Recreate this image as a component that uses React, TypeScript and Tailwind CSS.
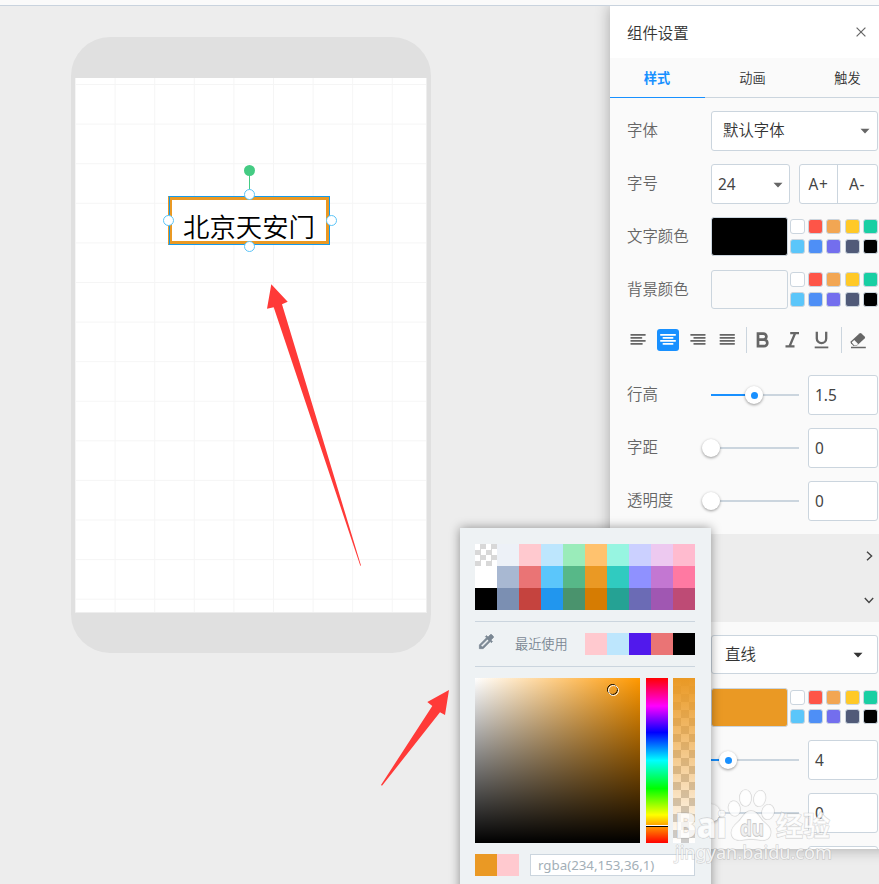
import React from "react";

const PRESETS = [
  "bg-white", "bg-[#fe5548]", "bg-[#f2a653]", "bg-[#ffc927]", "bg-[#18cfa3]",
  "bg-[#5bc6fa]", "bg-[#4e8ff6]", "bg-[#736eee]", "bg-[#505a78]", "bg-black",
];

const PALETTE = [
  "checker", "bg-[#edf1f7]", "bg-[#ffc9cf]", "bg-[#bde6fd]", "bg-[#9aecba]", "bg-[#ffc26e]", "bg-[#97f5e1]", "bg-[#cbd0ff]", "bg-[#edc9f0]", "bg-[#ffbbcf]",
  "bg-white", "bg-[#a8b8d2]", "bg-[#ea7475]", "bg-[#5bc6fb]", "bg-[#57b888]", "bg-[#ea9924]", "bg-[#30cbc0]", "bg-[#8f91ff]", "bg-[#c377d2]", "bg-[#ff79a2]",
  "bg-black", "bg-[#7b8fb2]", "bg-[#c5433e]", "bg-[#2196ee]", "bg-[#4a936d]", "bg-[#d67c02]", "bg-[#25a294]", "bg-[#6b6bb5]", "bg-[#a057b2]", "bg-[#be4b75]",
];

const RECENT = ["bg-[#ffc9cf]", "bg-[#bde6fd]", "bg-[#5119ec]", "bg-[#ea7475]", "bg-black"];

function Label({ children }: { children?: React.ReactNode }) {
  return <div className="w-[84px] shrink-0 text-[15.4px] leading-none text-[#666]">{children}</div>;
}

function Caret({ className = "" }: { className?: string }) {
  return (
    <svg className={className} width="10" height="6" viewBox="0 0 10 6">
      <path d="M0.5 0.8H9.5L5 5.5Z" fill="currentColor" />
    </svg>
  );
}

function Swatches({ tight = false }: { tight?: boolean }) {
  return (
    <div className={`ml-[2px] grid grid-cols-[repeat(5,15px)] gap-x-[3.2px] ${tight ? "gap-y-[4px]" : "gap-y-[5px]"}`}>
      {PRESETS.map((c) => (
        <div key={c} className={`h-[15px] w-[15px] rounded-[3px] border border-[#cbd5de] ${c}`} />
      ))}
    </div>
  );
}

function ColorRow({ label, color, tight }: { label: string; color: string; tight?: boolean }) {
  return (
    <div className={tight ? "flex h-10 items-center" : "flex h-10 items-center pb-[2px]"}>
      <div className="pt-[2px]"><Label>{label}</Label></div>
      <div className={`h-[39px] w-[77px] rounded-[3px] border border-[#cbd5de] ${color}`} />
      <Swatches tight={tight} />
    </div>
  );
}

function SliderRow({ label, at, value, active }: { label: string; at: string; value: string; active?: boolean }) {
  return (
    <div className="flex h-10 items-center">
      <Label>{label}</Label>
      <div className="relative h-[2px] w-[88px] bg-[#cbd5de]">
        {active && <div className={`h-full bg-[#1890ff] ${at}`} />}
        <div className={`absolute top-0 left-0 h-0 ${at}`}>
          <div className="absolute -top-[8px] -right-[9px] flex h-[18px] w-[18px] items-center justify-center rounded-full bg-white shadow-[0_1px_3px_rgba(0,0,0,0.4)]">
            {active && <div className="h-[7px] w-[7px] rounded-full bg-[#1890ff]" />}
          </div>
        </div>
      </div>
      <div className="ml-[9px] flex h-10 w-[70px] items-center rounded-[3px] border border-[#cbd5de] bg-white pt-[2px] pl-[6px] text-[15.4px] font-normal text-[#444]">
        {value}
      </div>
    </div>
  );
}

function AlignIcon({ rows }: { rows: number[][] }) {
  return (
    <svg width="16" height="12" viewBox="0 0 16 12">
      {rows.map(([x, w], i) => (
        <rect key={i} x={x} y={i * 3 + 0.1} width={w} height="1.7" rx="0.8" fill="currentColor" />
      ))}
    </svg>
  );
}

function Toolbar() {
  return (
    <div className="flex h-[26px] items-center text-[#666]">
      <div className="flex w-[22px] justify-center"><AlignIcon rows={[[0.3, 15.5], [0.3, 12], [0.3, 15.5], [0.3, 12.5]]} /></div>
      <div className="ml-[8px] flex h-[22px] w-[22px] items-center justify-center rounded-[3px] bg-[#1890ff] text-white">
        <AlignIcon rows={[[0, 16], [2.5, 11], [0, 16], [2.5, 11]]} />
      </div>
      <div className="ml-[8px] flex w-[22px] justify-center"><AlignIcon rows={[[0.2, 15.5], [3.3, 12.4], [0.2, 15.5], [3.3, 12.4]]} /></div>
      <div className="ml-[7px] flex w-[22px] justify-center"><AlignIcon rows={[[0.5, 15.5], [0.5, 15.5], [0.5, 15.5], [0.5, 15.5]]} /></div>
      <div className="ml-[8px] h-[26px] w-px bg-[#cbd5de]" />
      <svg className="ml-[9px]" width="13" height="16" viewBox="0 0 13 16">
        <path d="M2 1.6H7.4a3 3 0 0 1 0 6H2ZM2 7.6H8a3.2 3.2 0 0 1 0 6.6H2Z" fill="none" stroke="currentColor" strokeWidth="2.7" />
      </svg>
      <svg className="ml-[16px]" width="15" height="16" viewBox="0 0 15 16">
        <path d="M5.2 1.2H14M0.5 14.4H9.5M10 1.5L4.7 14" fill="none" stroke="currentColor" strokeWidth="2.3" />
      </svg>
      <svg className="ml-[14px]" width="15" height="18" viewBox="0 0 15 18">
        <path d="M2.8 0.7V7.4a4.7 4.7 0 0 0 9.4 0V0.7" fill="none" stroke="currentColor" strokeWidth="2.3" />
        <path d="M0.7 16.4H14.3" stroke="currentColor" strokeWidth="1.8" />
      </svg>
      <div className="ml-[12px] h-[26px] w-px bg-[#cbd5de]" />
      <svg className="ml-[8px]" width="16" height="17" viewBox="0 0 16 17">
        <path d="M9.4 1.4Q10.4.5 11.4 1.4L14.6 4.6Q15.6 5.6 14.6 6.6L6.5 14H3.6L.9 11.3Q0 10.2 1 9.2Z" fill="currentColor" />
        <path d="M4.3 8L8.2 11.9L6.6 13.4H4.3L2 10.8Q1.7 10.4 2 10Z" fill="#fafafa" />
        <path d="M1 15.5H15.8" stroke="currentColor" strokeWidth="1.5" />
      </svg>
    </div>
  );
}

function Panel() {
  return (
    <aside className="h-[843px] w-[285px] shrink-0 overflow-hidden bg-[#fafafa] font-[350] shadow-[0_0_14px_rgba(0,0,0,0.3)]">
      <div className="flex h-[52px] items-center bg-white pr-[29px] pl-[17px]">
        <span className="pt-[3px] text-[15.4px] text-[#333]">组件设置</span>
        <svg className="ml-auto" width="10" height="10" viewBox="0 0 10 10">
          <path d="M0.6 0.6L9.4 9.4M9.4 0.6L0.6 9.4" stroke="#666" strokeWidth="1.2" />
        </svg>
      </div>
      <div className="grid h-10 grid-cols-3 items-start text-center text-[13.2px] leading-[38px] text-[#333]">
        <div className="border-b border-[#1890ff] pt-px pr-px font-bold text-[#1890ff]">样式</div>
        <div className="border-b border-[#cbd5de] pt-px">动画</div>
        <div className="border-b border-[#cbd5de] pt-px">触发</div>
      </div>
      <div className="flex flex-col gap-[13px] pt-[13px] pl-[17px] whitespace-nowrap">
        <div className="flex h-10 items-center">
          <Label>字体</Label>
          <div className="flex h-10 w-[167px] items-center rounded-[3px] border border-[#cbd5de] bg-white pr-[7px] pl-[11px] text-[15.4px] text-[#333]">
            默认字体<Caret className="ml-auto text-[#666]" />
          </div>
        </div>
        <div className="flex h-10 items-center">
          <Label>字号</Label>
          <div className="flex h-10 w-[79px] items-center rounded-[3px] border border-[#cbd5de] bg-white pt-px pr-[6px] pl-[6px] text-[15.4px] font-normal text-[#444]">
            24<Caret className="ml-auto text-[#666]" />
          </div>
          <div className="ml-[9px] flex h-10 w-[79px] rounded-[3px] border border-[#cbd5de] bg-white text-center text-[15.4px] leading-[39px] font-normal text-[#444]">
            <div className="w-[37px] tracking-[0.6px]">A+</div>
            <div className="flex-1 border-l border-[#cbd5de] pr-px tracking-[0.6px]">A-</div>
          </div>
        </div>
        <ColorRow label="文字颜色" color="bg-black" />
        <ColorRow label="背景颜色" color="bg-[#fafafa]" />
      </div>
      <div className="pt-[17px] pl-[17px]"><Toolbar /></div>
      <div className="flex h-[181px] flex-col gap-[13px] pt-[22px] pl-[17px] whitespace-nowrap">
        <SliderRow label="行高" at="w-[43px]" value="1.5" active />
        <SliderRow label="字距" at="w-0" value="0" />
        <SliderRow label="透明度" at="w-0" value="0" />
      </div>
      <div className="flex h-[88px] flex-col items-end bg-[#ededed] pr-[20px] text-[#444]">
        <div className="flex h-11 w-3 items-center justify-center">
          <svg width="7" height="10" viewBox="0 0 7 10"><path d="M1 0.8L5.6 5L1 9.2" fill="none" stroke="currentColor" strokeWidth="1.4" /></svg>
        </div>
        <div className="flex h-11 w-3 items-center justify-center">
          <svg width="10" height="7" viewBox="0 0 10 7"><path d="M0.8 1L5 5.4L9.2 1" fill="none" stroke="currentColor" strokeWidth="1.4" /></svg>
        </div>
      </div>
      <div className="flex flex-col gap-[13px] pt-[13px] pl-[17px] whitespace-nowrap">
        <div className="flex h-[39px] items-center">
          <Label />
          <div className="flex h-[39px] w-[167px] items-center rounded-[3px] border border-[#cbd5de] bg-white pt-px pr-[14px] pl-[13px] text-[15.4px] text-[#333]">
            直线<Caret className="mb-px ml-auto" />
          </div>
        </div>
        <ColorRow label="" color="bg-[#ea9924]" tight />
        <SliderRow label="" at="w-[17px]" value="4" active />
        <SliderRow label="" at="w-0" value="0" />
        <SliderRow label="" at="w-0" value="" />
      </div>
    </aside>
  );
}

function Handle({ className }: { className: string }) {
  return <div className={`absolute h-[11px] w-[11px] rounded-full border border-[#5bc4f7] bg-white ${className}`} />;
}

function Phone() {
  return (
    <div className="mt-[31px] ml-[71px] h-[616px] w-[360px] rounded-[39px] bg-[#e0e0e0] px-1 py-[41px]">
      <div className="relative h-[535px] border-r border-b border-[#eee] bg-white bg-[linear-gradient(to_right,#f5f5f5_1px,transparent_1px),linear-gradient(to_bottom,#f5f5f5_1px,transparent_1px)] bg-[size:39.6px_39.6px] bg-[position:0px_6px]">
        <div className="absolute top-[118px] left-[93px] h-[49px] w-[162px] border border-[#149cee] border-l-[#ea9924] bg-[#ea9924] p-[3px]">
          <div className="absolute top-0 left-0 h-full w-px bg-[#149cee]" />
          <div className="h-full bg-white pt-[7px] text-center text-[26.4px] leading-[40px] font-[350] whitespace-nowrap text-black">
            北京天安门
          </div>
          <div className="absolute -top-[22px] left-[80px] h-[15px] w-px bg-[#44cb83]" />
          <div className="absolute -top-[32px] left-[75px] h-[11px] w-[11px] rounded-full bg-[#44cb83]" />
          <Handle className="-top-[8px] left-[75px]" />
          <Handle className="-bottom-[8px] left-[75px]" />
          <Handle className="top-[18px] -left-[6px]" />
          <Handle className="top-[18px] -right-[8px]" />
        </div>
      </div>
    </div>
  );
}

function Picker() {
  return (
    <div className="absolute top-[528px] left-[460px] h-[370px] w-[251px] bg-[#eef2f4] px-[15px] pt-4 pr-4 shadow-[0_0_10px_rgba(0,0,0,0.4)]">
      <div className="grid grid-cols-[repeat(10,22px)]">
        {PALETTE.map((c, i) =>
          c === "checker" ? (
            <div key={i} className="h-[22px] bg-[repeating-conic-gradient(#d8d8d8_0_25%,#fff_0_50%)] bg-[size:11px_11px]" />
          ) : (
            <div key={i} className={`h-[22px] ${c}`} />
          ),
        )}
      </div>
      <div className="mt-[11px] flex h-[46px] items-center border-y border-[#cbd5de]">
        <svg className="mb-[6px] ml-[2px]" width="19" height="19" viewBox="0 0 24 24">
          <path d="M20.7 5.6l-2.3-2.3a1 1 0 0 0-1.4 0l-3.1 3.1L12 4.5 10.6 5.9 12 7.3 3 16.3V21h4.8l8.9-8.9 1.4 1.4 1.4-1.4-1.9-1.9 3.1-3.1a1 1 0 0 0 0-1.5zM6.9 19L5 17.1l8.1-8.1 1.9 1.9z" fill="#7a8793" stroke="#7a8793" strokeWidth="0.9" />
        </svg>
        <span className="mt-px ml-[19px] text-[13.2px] font-[350] text-[#7a8793]">最近使用</span>
        <div className="ml-auto flex">
          {RECENT.map((c) => <div key={c} className={`h-[22px] w-[22px] ${c}`} />)}
        </div>
      </div>
      <div className="mt-[11px] flex h-[165px]">
        <div className="relative w-[165px] bg-[linear-gradient(to_top,#000,transparent),linear-gradient(to_right,#fff,#ff9800)]">
          <div className="absolute top-[6px] left-[132px] h-[11px] w-[11px] rounded-full border border-black" />
          <div className="absolute top-[7px] left-[133px] h-[11px] w-[11px] rounded-full border border-white" />
        </div>
        <div className="relative ml-[6px] w-[22px] bg-[linear-gradient(#f00,#f0f_17%,#00f_33%,#0ff_50%,#0f0_67%,#ff0_83%,#f00)]">
          <div className="absolute top-[147px] h-[2px] w-full border-t border-white bg-black" />
        </div>
        <div className="ml-[5px] w-[22px] bg-[linear-gradient(#ea9924,transparent),repeating-conic-gradient(#ccc_0_25%,#fff_0_50%)] bg-[size:100%_100%,16px_16px]" />
      </div>
      <div className="mt-[11px] flex">
        <div className="h-[22px] w-[22px] bg-[#ea9924]" />
        <div className="h-[22px] w-[22px] bg-[#ffc9cf]" />
        <div className="ml-[11px] flex h-[22px] w-[165px] items-center border border-[#cbd5de] bg-white pt-px pl-[7px] text-[13.3px] text-[#a3afb7]">
          rgba(234,153,36,1)
        </div>
      </div>
    </div>
  );
}

function Watermark() {
  return (
    <svg className="absolute top-[780px] left-[665px]" width="180" height="100" viewBox="665 780 180 100">
      <g fill="#fff" fillOpacity="0.8" stroke="#999" strokeOpacity="0.36" strokeWidth="1.3" paintOrder="stroke">
        <text x="675" y="838" fontSize="35" fontWeight="900" textLength="52" lengthAdjust="spacingAndGlyphs">Bai</text>
        <ellipse cx="745.5" cy="798" rx="5.8" ry="8.2" />
        <ellipse cx="759.7" cy="798.5" rx="5.8" ry="8" transform="rotate(12 759.7 798.5)" />
        <ellipse cx="734.3" cy="808.5" rx="5.8" ry="7.5" transform="rotate(-14 734.3 808.5)" />
        <ellipse cx="768" cy="812" rx="6" ry="7.5" transform="rotate(14 768 812)" />
        <path d="M751 811C744 811 743 818 738 822C732 827 730 831 732 836C735 843 744 839 751 839C758 839 767 843 770 836C772 830 770 827 764 822C759 818 758 811 751 811Z" />
        <text x="740" y="836" fontSize="22" fontWeight="700" textLength="24" lengthAdjust="spacingAndGlyphs" fill="#eee" strokeOpacity="0.6">du</text>
        <text x="776" y="836" fontSize="27" fontWeight="700" textLength="54" lengthAdjust="spacingAndGlyphs">经验</text>
        <text x="675" y="859" fontSize="17.5" textLength="157" lengthAdjust="spacingAndGlyphs">jingyan.baidu.com</text>
      </g>
    </svg>
  );
}

export default function App() {
  return (
    <div className="relative h-[884px] w-[879px] overflow-hidden bg-[#ededed] font-['Noto_Sans','Noto_Sans_CJK_SC',sans-serif]">
      <header className="relative z-10 h-[6px] border-b border-[#c9d3de] bg-[#fafafa]" />
      <main className="flex">
        <section className="w-[610px] shrink-0"><Phone /></section>
        <Panel />
      </main>
      <Picker />
      <svg className="pointer-events-none absolute top-0 left-0" width="879" height="884">
        <g fill="#ff3a38">
          <path d="M271.3 284.3L287.7 301.7L282 304.3L361 565.5L360.3 565.8L273.7 307.3L267 308.7Z" />
          <path d="M449 690L445 715L440 712.3L382 785.8L381 785L432.3 706L427.3 702Z" />
        </g>
      </svg>
      <Watermark />
    </div>
  );
}
